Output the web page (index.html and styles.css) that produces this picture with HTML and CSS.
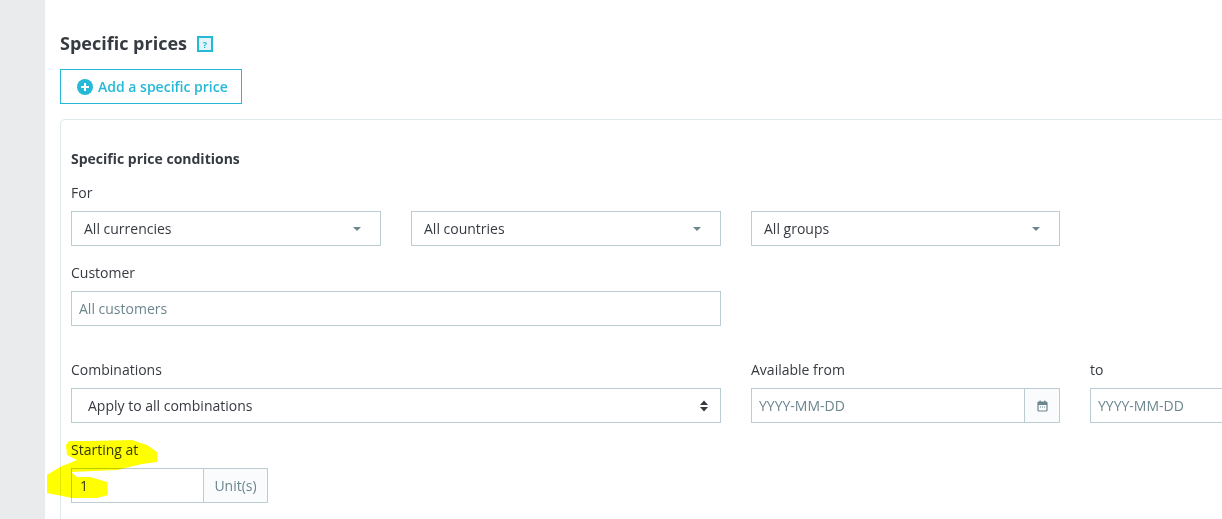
FILE: index.html
```html
<!DOCTYPE html>
<html lang="en">
<head>
<meta charset="utf-8">
<title>Specific prices</title>
<link rel="stylesheet" href="styles.css">
</head>
<body>
<div class="page">
  <aside class="sidebar"></aside>
  <main class="main">
    <div class="title-row">
      <h2 class="title">Specific prices</h2>
      <span class="help">?</span>
    </div>
    <button class="add-btn" type="button">
      <svg class="plus" viewBox="0 0 16 16" width="16" height="16"><circle cx="8" cy="8" r="8" fill="#25b9d7"/><path d="M8 4v8M4 8h8" stroke="#fff" stroke-width="2"/></svg>
      <span>Add a specific price</span>
    </button>
    <section class="card">
      <h4 class="card-title">Specific price conditions</h4>
      <div class="label for-label">For</div>
      <div class="row three">
        <div class="select">All currencies<i class="caret"></i></div>
        <div class="select">All countries<i class="caret"></i></div>
        <div class="select">All groups<i class="caret"></i></div>
      </div>
      <div class="label customer-label">Customer</div>
      <div class="input customer">All customers</div>
      <div class="row dates-labels">
        <div class="label wide">Combinations</div>
        <div class="label col">Available from</div>
        <div class="label col">to</div>
      </div>
      <div class="row dates">
        <div class="select combos">Apply to all combinations
          <svg class="updown" viewBox="0 0 8 12" width="8" height="12"><path d="M4 .5 8 5H0zM0 7h8l-4 4.500z" fill="#363a41"/></svg>
        </div>
        <div class="group col">
          <div class="group-input ph">YYYY-MM-DD</div>
          <div class="addon cal">
            <svg viewBox="0 0 11 12" width="11" height="12"><rect x="1" y="2" width="9" height="9" rx="1" fill="none" stroke="#6c868e" stroke-width="1.200"/><path d="M1 2h9v3H1zM2.500 .5h1.200V2H2.500zM7.300 .5h1.200V2H7.300zM3 6.500h1v1H3zM5 6.500h1v1H5zM7 6.500h1v1H7z" fill="#6c868e"/></svg>
          </div>
        </div>
        <div class="group col">
          <div class="group-input ph">YYYY-MM-DD</div>
          <div class="addon cal"></div>
        </div>
      </div>
      <div class="label start-label">Starting at</div>
      <div class="group qty">
        <div class="group-input val">1</div>
        <div class="addon unit">Unit(s)</div>
      </div>
    </section>
  </main>
  <svg class="marker" viewBox="0 0 112 60" width="112" height="60">
    <path d="M22 1 40 1 85 0 100 5 110 12 110 22 95 24 70 30 24 32 30 37 43 37 60 42 61 55 50 58 25 58 0 53 0 35 13 27 30 20 20 15 19 5z" fill="#ffff00"/>
  </svg>
</div>
</body>
</html>
```
FILE: styles.css
```css
* { box-sizing: border-box; }
html, body { margin: 0; padding: 0; height: 100%; overflow: hidden; background: #fff; }
body { font-family: "Open Sans", "Noto Sans", sans-serif; font-size: 14px; color: #363a41; }
.page { position: relative; display: flex; width: 1222px; height: 519px; overflow: hidden; }
.sidebar { flex: 0 0 45px; background: #eaebec; }
.main { flex: 1 0 auto; width: 1177px; padding: 30px 0 0 15px; }
.title-row { display: flex; align-items: center; height: 27px; margin-bottom: 12px; }
.title { margin: 0; font-size: 18px; font-weight: 700; line-height: 27px; }
.help { display: flex; align-items: center; justify-content: center; width: 16px; height: 16px; margin-left: 10px; margin-top: 1px; border: 2px solid #25b9d7; background: #e3f5f9; color: #25b9d7; font-size: 9px; font-weight: 700; }
.add-btn { display: flex; align-items: center; gap: 5px; width: 182px; height: 35px; padding: 0 0 0 16px; border: 1px solid #25b9d7; background: #fff; color: #25b9d7; font-family: inherit; font-size: 14px; font-weight: 600; }
.plus { flex: none; margin-top: 1px; }
.card { width: 1300px; height: 420px; margin-top: 15px; padding: 29px 10px 0; border: 1px solid #dfe8ea; border-radius: 5px; }
.card-title { margin: 0; font-size: 14px; font-weight: 700; line-height: 19px; }
.label { font-size: 14px; line-height: 19px; white-space: nowrap; }
.for-label { margin-top: 15px; }
.row { display: flex; gap: 30px; }
.three { margin-top: 9px; }
.select, .input, .group { height: 35px; border: 1px solid #bbcdd2; background: #fff; }
.select { position: relative; display: flex; align-items: center; flex: none; width: 310px; padding-left: 12px; }
.three .select:last-child { width: 309px; }
.caret { position: absolute; right: 19px; top: 15px; border-style: solid; border-width: 4px 4px 0; border-color: #6c868e transparent transparent; }
.customer-label { margin-top: 17px; }
.input { display: flex; align-items: center; width: 650px; margin-top: 9px; padding-left: 7px; color: #6c868e; }
.dates-labels { margin-top: 34px; }
.wide { width: 650px; flex: none; }
.col { width: 309px; flex: none; }
.dates { margin-top: 9px; }
.combos { width: 650px; padding-left: 16px; }
.updown { position: absolute; right: 12px; top: 11px; }
.group { display: flex; }
.group-input { display: flex; align-items: center; flex: 1; padding-left: 7px; }
.ph { color: #6c868e; }
.addon { display: flex; align-items: center; justify-content: center; border-left: 1px solid #bbcdd2; background: #fafbfc; color: #6c868e; }
.cal { width: 35px; flex: none; }
.start-label { margin-top: 17px; }
.qty { width: 197px; margin-top: 9px; }
.qty .group-input { padding-left: 8px; }
.unit { width: 64px; flex: none; }
.marker { position: absolute; left: 47px; top: 440px; pointer-events: none; mix-blend-mode: multiply; }
```
